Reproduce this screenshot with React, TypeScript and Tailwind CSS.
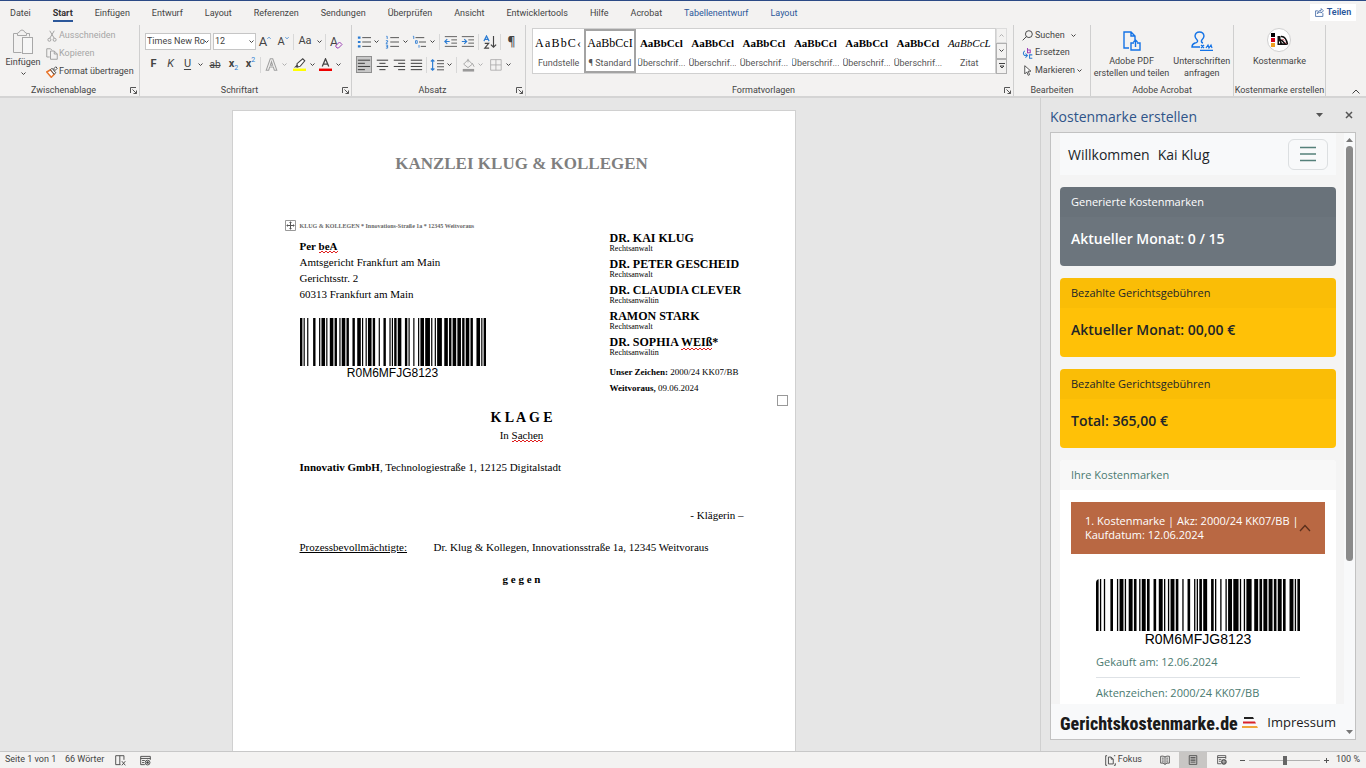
import { useState, type ReactNode } from "react";

const TABS = [
  "Datei",
  "Start",
  "Einfügen",
  "Entwurf",
  "Layout",
  "Referenzen",
  "Sendungen",
  "Überprüfen",
  "Ansicht",
  "Entwicklertools",
  "Hilfe",
  "Acrobat",
];

const CONTEXT_TABS = ["Tabellenentwurf", "Layout"];

const STYLES = [
  { name: "Fundstelle", sample: "AaBbC‹", look: "text-[12px] tracking-widest" },
  { name: "¶ Standard", sample: "AaBbCcI", look: "text-[12px]" },
  { name: "Überschrif...", sample: "AaBbCcl", look: "text-[11px] font-bold" },
  { name: "Überschrif...", sample: "AaBbCcl", look: "text-[11px] font-bold" },
  { name: "Überschrif...", sample: "AaBbCcl", look: "text-[11px] font-bold" },
  { name: "Überschrif...", sample: "AaBbCcl", look: "text-[11px] font-bold" },
  { name: "Überschrif...", sample: "AaBbCcl", look: "text-[11px] font-bold" },
  { name: "Überschrif...", sample: "AaBbCcl", look: "text-[11px] font-bold" },
  { name: "Zitat", sample: "AaBbCcL", look: "text-[11px] italic" },
];

const LAWYERS = [
  { name: "DR. KAI KLUG", role: "Rechtsanwalt" },
  { name: "DR. PETER GESCHEID", role: "Rechtsanwalt" },
  { name: "DR. CLAUDIA CLEVER", role: "Rechtsanwältin" },
  { name: "RAMON STARK", role: "Rechtsanwalt" },
];

// Code 128 symbols: Start B, R 0 M 6 M F J G, Code C, 81, 23, checksum, Stop
const CODE128 = [
  "211214",
  "231131",
  "123122",
  "113123",
  "223112",
  "113123",
  "132311",
  "112133",
  "211313",
  "113141",
  "121142",
  "312131",
  "312131",
  "2331112",
].join("");

function Barcode({ className }: { className: string }) {
  const bars: { x: number; w: number }[] = [];
  let x = 0;
  CODE128.split("").forEach((digit, i) => {
    const w = Number(digit);
    if (i % 2 === 0) bars.push({ x, w });
    x += w;
  });
  return (
    <svg
      className={className}
      viewBox={`0 0 ${x} 40`}
      preserveAspectRatio="none"
      role="img"
      aria-label="Barcode R0M6MFJG8123"
    >
      {bars.map((b) => (
        <rect key={b.x} x={b.x} y="0" width={b.w} height="40" fill="#000" />
      ))}
    </svg>
  );
}

function Icon({
  children,
  className = "h-4 w-4",
}: {
  children: ReactNode;
  className?: string;
}) {
  return (
    <svg
      className={`${className} shrink-0`}
      viewBox="0 0 16 16"
      fill="none"
      stroke="#444"
      strokeWidth={1}
    >
      {children}
    </svg>
  );
}

function Chevron({ light = false }: { light?: boolean }) {
  return (
    <svg
      className="h-[5px] w-[5px] shrink-0"
      viewBox="0 0 5 5"
      fill="none"
      stroke={light ? "#b0b0b0" : "#444"}
    >
      <path d="M.5 1.5l2 2 2-2" />
    </svg>
  );
}

function Tool({
  label,
  children,
  className = "w-[17px]",
}: {
  label: string;
  children: ReactNode;
  className?: string;
}) {
  return (
    <button
      aria-label={label}
      className={`${className} flex h-[17px] shrink-0 items-center justify-center`}
    >
      {children}
    </button>
  );
}

function More({ light = false }: { light?: boolean }) {
  return (
    <Tool label="Weitere Optionen" className="w-[9px]">
      <Chevron light={light} />
    </Tool>
  );
}

function Sep({ className = "mx-px" }: { className?: string }) {
  return <span className={`${className} h-4 w-px shrink-0 bg-[#d8d8d8]`} />;
}

function Launcher() {
  return (
    <button aria-label="Dialog öffnen" className="absolute right-[2px] bottom-[2px]">
      <svg
        className="h-[7px] w-[7px]"
        viewBox="0 0 7 7"
        fill="none"
        stroke="#555"
      >
        <path d="M.5 6V.5H6M2.5 2.5l4 4M6.5 3.5v3h-3" />
      </svg>
    </button>
  );
}

function Group({
  title,
  className,
  launcher = false,
  children,
}: {
  title: string;
  className: string;
  launcher?: boolean;
  children: ReactNode;
}) {
  return (
    <section
      className={`${className} flex flex-col border-r border-[#cfcfcf]`}
    >
      <div className="flex-1 pt-px">{children}</div>
      <div
        className={`relative pb-px text-center leading-[10px] whitespace-nowrap ${
          launcher ? "pr-3" : ""
        }`}
      >
        {title}
        {launcher && <Launcher />}
      </div>
    </section>
  );
}

function Lines({ rows }: { rows: [number, number][] }) {
  return (
    <Icon className="h-[14px] w-[14px]">
      {rows.map(([from, to], i) => (
        <path key={i} d={`M${from} ${2.5 + i * 3.6}H${to}`} strokeWidth="1.2" />
      ))}
    </Icon>
  );
}

function ClipboardGroup() {
  return (
    <Group title="Zwischenablage" className="w-[140px] shrink-0" launcher>
      <div className="flex">
        <button className="flex w-[46px] flex-col items-center pt-[3px]">
          <svg
            className="h-[26px] w-[22px]"
            viewBox="0 0 22 26"
            fill="none"
            stroke="#a8a8a8"
          >
            <path d="M9.5 23.5H1.5V4.5H5.5M14.5 4.5H17.5V7.5M5.5 6.5V4.5Q5.5 3.5 7 3.5 8 1 10 1T13 3.5Q14.5 3.5 14.5 4.5V6.5Z" />
            <rect x="10.5" y="8.5" width="10" height="16" fill="#f6f6f6" />
          </svg>
          <span className="mt-px leading-[12px]">Einfügen</span>
          <span className="flex h-2 items-end">
            <Chevron />
          </span>
        </button>
        <div className="flex flex-col items-start pt-px">
          <button
            disabled
            className="flex h-[18px] items-center text-[#a6a6a6]"
          >
            <Icon className="mr-px h-3 w-3">
              <g stroke="#a0a0a0" strokeWidth="1.3">
                <path d="M5 1l6 10M11 1L5 11" />
                <circle cx="4.5" cy="13" r="2" />
                <circle cx="11.5" cy="13" r="2" />
              </g>
            </Icon>
            Ausschneiden
          </button>
          <button
            disabled
            className="flex h-[18px] items-center text-[#a6a6a6]"
          >
            <Icon className="mr-px h-3 w-3">
              <g stroke="#a0a0a0" strokeWidth="1.3">
                <path d="M5 12H1V1h5l2 2" />
                <path d="M6 4h5l4 4v7H6zM11 4v4h4" />
              </g>
            </Icon>
            Kopieren
          </button>
          <button className="flex h-[18px] items-center whitespace-nowrap">
            <Icon className="mr-px h-3 w-3">
              <path d="M1 8l5-3 5 6-4 4z" fill="#fff" stroke="#e8762c" strokeWidth="2" />
              <path d="M6 5l2-2 5 6-2 2zM10 4l3-3 2 2-3 3z" fill="#fff" strokeWidth="1.3" />
            </Icon>
            Format übertragen
          </button>
        </div>
      </div>
    </Group>
  );
}

function FontGroup() {
  return (
    <Group title="Schriftart" className="w-[212px] shrink-0" launcher>
      <div className="flex items-center pt-[7px] pl-[5px]">
        <div className="relative mr-[2px]">
          <select
            aria-label="Schriftart"
            className="block h-[17px] w-[66px] appearance-none border border-[#c6c6c6] bg-white pl-px"
          >
            <option>Times New Ro</option>
          </select>
          <span className="pointer-events-none absolute top-[6px] right-[2px]">
            <Chevron />
          </span>
        </div>
        <div className="relative">
          <select
            aria-label="Schriftgrad"
            className="block h-[17px] w-[43px] appearance-none border border-[#c6c6c6] bg-white pl-px"
          >
            <option>12</option>
          </select>
          <span className="pointer-events-none absolute top-[6px] right-[2px]">
            <Chevron />
          </span>
        </div>
        <Tool label="Schrift vergrößern" className="w-[18px]">
          <span className="text-[13px] leading-none">A</span>
          <svg className="mb-2 h-1 w-1" viewBox="0 0 5 5" fill="none" stroke="#2b7cd3">
            <path d="M.5 3.5l2-2 2 2" />
          </svg>
        </Tool>
        <Tool label="Schrift verkleinern" className="w-[18px]">
          <span className="text-[11px] leading-none">A</span>
          <svg className="mb-2 h-1 w-1" viewBox="0 0 5 5" fill="none" stroke="#2b7cd3">
            <path d="M.5 1.5l2 2 2-2" />
          </svg>
        </Tool>
        <Sep />
        <Tool label="Groß-/Kleinschreibung" className="w-[20px]">
          <span className="text-[11px]">Aa</span>
        </Tool>
        <More />
        <Sep className="mr-[2px] ml-px" />
        <Tool label="Formatierung löschen">
          <span className="text-[12px] leading-none">A</span>
          <Icon className="mt-[6px] -ml-[3px] h-2 w-2">
            <path d="M1 10L9 2l5 5-7 7H4z" stroke="#9b3fb5" strokeWidth="2" fill="#f3f2f1" />
          </Icon>
        </Tool>
      </div>
      <div className="flex items-center pt-[6px] pl-[5px] text-[11px]">
        <Tool label="Fett">
          <b>F</b>
        </Tool>
        <Tool label="Kursiv">
          <i>K</i>
        </Tool>
        <Tool label="Unterstrichen">
          <u className="underline-offset-2">U</u>
        </Tool>
        <More />
        <Tool label="Durchgestrichen" className="w-[20px]">
          <s className="text-[10px]">ab</s>
        </Tool>
        <Tool label="Tiefgestellt">
          <b>x</b>
          <span className="mt-2 text-[7px] text-[#2b7cd3]">2</span>
        </Tool>
        <Tool label="Hochgestellt">
          <b>x</b>
          <span className="mb-2 text-[7px] text-[#2b7cd3]">2</span>
        </Tool>
        <Sep className="ml-px mr-[2px]" />
        <Tool label="Texteffekte">
          <Icon className="h-[13px] w-[13px]">
            <path
              d="M6.5 1h3l5 14h-3l-1.3-4H5.8L4.5 15h-3zM8 4.5L6.6 9h2.8z"
              stroke="#a0a0a0"
              strokeWidth="1.3"
            />
          </Icon>
        </Tool>
        <More light />
        <Tool label="Texthervorhebungsfarbe" className="ml-px w-[18px]">
          <Icon className="h-[13px] w-[13px]">
            <path d="M0 14.5h16" stroke="#ffff00" strokeWidth="3" />
            <path d="M5 7l7-6 2.5 2.5L9 10 5 11.5z" strokeWidth="1.3" fill="#fff" />
            <path d="M1 12l4-4 2 2.5z" fill="#444" stroke="none" />
          </Icon>
        </Tool>
        <More />
        <Tool label="Schriftfarbe">
          <Icon className="h-[13px] w-[13px]">
            <path d="M0 14.5h16" stroke="#ee0000" strokeWidth="3" />
            <path d="M4 10.5L8 1l4 9.5M5.5 7.5h5" strokeWidth="1.6" />
          </Icon>
        </Tool>
        <More />
      </div>
    </Group>
  );
}

function ParagraphGroup() {
  return (
    <Group title="Absatz" className="w-[174px] shrink-0" launcher>
      <div className="flex items-center pt-[7px] pl-[3px]">
        <Tool label="Aufzählungszeichen">
          <Icon className="h-[14px] w-[14px]">
            <path d="M1 3h3M1 8h3M1 13h3" stroke="#2b7cd3" strokeWidth="2.4" />
            <path d="M6 3h10M6 8h10M6 13h10" />
          </Icon>
        </Tool>
        <More />
        <Tool label="Nummerierung" className="ml-[2px] w-[18px]">
          <Icon className="h-[14px] w-[14px]">
            <path d="M1.5 1.5h1v3M1 6.5h2v1.5l-2 1.5h2M1 11.5h2v3.5H1M1.5 13.2H3" stroke="#2b7cd3" />
            <path d="M6 3h10M6 8h10M6 13h10" />
          </Icon>
        </Tool>
        <More />
        <Tool label="Liste mit mehreren Ebenen" className="w-[18px]">
          <Icon className="h-[14px] w-[14px]">
            <path d="M1 1.5h1v3M4 6.5h2v3H4zM8 11.5v3" stroke="#2b7cd3" />
            <path d="M4 3h10M8 8h8M10 13h6" />
          </Icon>
        </Tool>
        <More />
        <Sep className="mx-[2px]" />
        <Tool label="Einzug verkleinern">
          <Icon className="h-[13px] w-[13px]">
            <path d="M1 2h15M9 6h7M9 10h7M1 14h15" />
            <path d="M7 8H1M4 5L1 8l3 3" stroke="#2b7cd3" strokeWidth="1.4" />
          </Icon>
        </Tool>
        <Tool label="Einzug vergrößern">
          <Icon className="h-[13px] w-[13px]">
            <path d="M1 2h15M9 6h7M9 10h7M1 14h15" />
            <path d="M1 8h6M4 5l3 3-3 3" stroke="#2b7cd3" strokeWidth="1.4" />
          </Icon>
        </Tool>
        <Sep className="mx-[2px]" />
        <Tool label="Sortieren">
          <Icon className="h-[14px] w-[14px]">
            <path d="M1 7l3-6 3 6M2 5h4" stroke="#2b7cd3" strokeWidth="1.3" />
            <path d="M2 9.5h4.5L2 15h5M12 1v13M9 11l3 3 3-3" strokeWidth="1.3" />
          </Icon>
        </Tool>
        <Sep className="mx-[2px]" />
        <Tool label="Absatzmarken anzeigen">
          <span className="font-['Open_Sans',sans-serif] text-[12px] font-semibold">
            ¶
          </span>
        </Tool>
      </div>
      <div className="flex items-center pt-[6px] pl-[4px]">
        <button
          aria-label="Linksbündig"
          className="mr-px flex h-[17px] w-4 items-center justify-center border border-[#8f8f8f] bg-[#c8c8c8]"
        >
          <Lines rows={[[1, 15], [1, 9], [1, 15], [1, 9]]} />
        </button>
        <Tool label="Zentriert">
          <Lines rows={[[2, 15], [5, 12], [2, 15], [5, 12]]} />
        </Tool>
        <Tool label="Rechtsbündig">
          <Lines rows={[[2, 15], [7, 15], [2, 15], [7, 15]]} />
        </Tool>
        <Tool label="Blocksatz">
          <Lines rows={[[2, 15], [2, 15], [2, 15], [2, 15]]} />
        </Tool>
        <Sep className="mr-px ml-[2px]" />
        <Tool label="Zeilenabstand">
          <Icon className="h-[14px] w-[14px]">
            <path d="M3 2v12M1 4l2-2 2 2M1 12l2 2 2-2" stroke="#2b7cd3" strokeWidth="1.3" />
            <path d="M8 3h8M8 6.5h8M8 10h8M8 13.5h8" />
          </Icon>
        </Tool>
        <More />
        <Sep className="mx-[2px]" />
        <Tool label="Schattierung">
          <Icon className="h-[14px] w-[14px]">
            <path d="M2 14h13" stroke="#999" strokeWidth="3" />
            <path d="M3 7l5-5 5 5-5 4zM8 5V1M13 6l2 4" stroke="#a0a0a0" />
          </Icon>
        </Tool>
        <More light />
        <Tool label="Rahmen" className="ml-px w-[18px]">
          <Icon className="h-[13px] w-[13px]">
            <path d="M2 2h13v13H2zM8.5 2v13M2 8.5h13" stroke="#a8a8a8" />
          </Icon>
        </Tool>
        <More />
      </div>
    </Group>
  );
}

function StylesGroup() {
  const [selected, setSelected] = useState(1);
  return (
    <Group title="Formatvorlagen" className="min-w-0 flex-1" launcher>
      <div className="mx-[6px] mt-[2px] flex h-[46px] bg-white">
        <div className="flex min-w-0 flex-1 border border-[#d0d0d0]">
          {STYLES.map((s, i) => (
            <button
              key={i}
              onClick={() => setSelected(i)}
              className={`flex min-w-0 flex-1 flex-col items-center justify-center overflow-hidden border-2 pt-px whitespace-nowrap ${
                i === selected ? "border-[#a3a3a3]" : "border-transparent"
              }`}
            >
              <span
                className={`${s.look} font-['Liberation_Serif',serif] leading-[18px] text-black`}
              >
                {s.sample}
              </span>
              <span className="mt-[4px] leading-[14px] text-[#555]">
                {s.name}
              </span>
            </button>
          ))}
        </div>
        <div className="flex w-[11px] flex-col bg-[#f3f2f1]">
          <button
            aria-label="Vorherige Zeile"
            className="flex flex-1 items-center justify-center border border-[#dcdcdc]"
          >
            <svg className="h-[5px] w-[5px]" viewBox="0 0 5 5" fill="none" stroke="#b0b0b0">
              <path d="M.5 3.5l2-2 2 2" />
            </svg>
          </button>
          <button
            aria-label="Nächste Zeile"
            className="flex flex-1 items-center justify-center border border-[#b0b0b0]"
          >
            <Chevron />
          </button>
          <button
            aria-label="Alle Formatvorlagen"
            className="flex flex-1 items-center justify-center border border-[#b0b0b0]"
          >
            <svg className="h-[6px] w-[6px]" viewBox="0 0 6 6" fill="none" stroke="#444">
              <path d="M0 .5h6M1 3l2 2 2-2z" />
            </svg>
          </button>
        </div>
      </div>
    </Group>
  );
}

function EditGroup() {
  return (
    <Group title="Bearbeiten" className="w-[77px] shrink-0">
      <div className="flex flex-col items-start pt-px pl-[8px]">
        <button className="flex h-[17px] items-center gap-[2px]">
          <Icon className="h-[11px] w-[11px]">
            <circle cx="10" cy="6" r="5" strokeWidth="1.4" />
            <path d="M6.5 9.5L1 15" strokeWidth="1.4" />
          </Icon>
          Suchen
          <span className="ml-1">
            <Chevron />
          </span>
        </button>
        <button className="flex h-[18px] items-center gap-[2px]">
          <Icon className="h-[11px] w-[11px]">
            <path d="M8 0v7h4V3H8" stroke="#9b3fb5" strokeWidth="1.5" />
            <path d="M15 10h-4v5h4M4 4Q0 8 4 11h4M5 8l3 3-3 3" stroke="#2b7cd3" strokeWidth="1.5" />
          </Icon>
          Ersetzen
        </button>
        <button className="flex h-[17px] items-center gap-[2px]">
          <Icon className="h-[11px] w-[11px]">
            <path d="M4 1v12l3-3 2 5 2-1-2-5h4z" strokeWidth="1.3" fill="#fff" />
          </Icon>
          Markieren
          <Chevron />
        </button>
      </div>
    </Group>
  );
}

function AcrobatGroup() {
  return (
    <Group title="Adobe Acrobat" className="w-[143px] shrink-0">
      <div className="flex justify-center gap-1 pt-[5px] leading-[12px]">
        <button className="flex flex-col items-center whitespace-nowrap">
          <svg
            className="mb-[4px] h-5 w-[18px]"
            viewBox="0 0 18 20"
            fill="none"
            stroke="#1473e6"
            strokeWidth="1.4"
          >
            <path d="M6 17H1V1h7l4 4v4M8 1v4h4M11 12H8v7h9v-7h-3M12.5 16V9M10.5 11l2-2 2 2" />
          </svg>
          <span>Adobe PDF</span>
          <span>erstellen und teilen</span>
        </button>
        <button className="flex flex-col items-center whitespace-nowrap">
          <svg
            className="mb-[4px] h-5 w-[22px]"
            viewBox="0 0 22 20"
            fill="none"
            stroke="#1473e6"
            strokeWidth="1.4"
          >
            <path d="M9 16H1Q1 13 4 12 7 11.500 6.500 9.500 4 7 4 5 4.500 1 8.500 1T13 5Q13 7 10.500 9.500 10 11.500 12 12" />
            <path d="M10 14l3 3M13 14l-3 3M15 17l2-3 1 3 2-3 1 3M9 19.3h13" strokeWidth="1.2" />
          </svg>
          <span>Unterschriften</span>
          <span>anfragen</span>
        </button>
      </div>
    </Group>
  );
}

function KostenmarkeGroup() {
  return (
    <Group title="Kostenmarke erstellen" className="w-[92px] shrink-0">
      <button className="mx-auto flex flex-col items-center pt-[2px] leading-[12px]">
        <svg className="mb-[3px] h-6 w-6" viewBox="0 0 24 24">
          <circle cx="12" cy="12" r="11.5" fill="#fff" stroke="#cfcfcf" />
          <path d="M4 5h4v4H4z" fill="#000" />
          <path d="M4 10h4v4H4z" fill="#d0021b" />
          <path d="M4 15h4v4H4z" fill="#f0a020" />
          <path d="M10.5 8h3v3l2 1 5 5h-10z" fill="#111" />
          <path d="M14 8.5q5-.5 6.500 8" stroke="#111" strokeWidth="1.6" fill="none" />
          <path d="M12.5 13.5v2M16 15.5l-1.500-2" stroke="#fff" />
          <path d="M15.5 11l1.5 1.5M18 14.5l1 1" stroke="#d0021b" />
        </svg>
        Kostenmarke
      </button>
    </Group>
  );
}

function Ribbon() {
  const [active, setActive] = useState("Start");
  return (
    <header className="border-t border-b-2 border-t-[#2b4a86] border-b-[#d4d4d4] bg-[#f3f2f1]">
      <nav className="flex h-6 items-start justify-between pr-[10px] pl-[10px]">
        <div className="flex gap-[22px] pt-[5px]">
          {TABS.map((tab) => (
            <button
              key={tab}
              onClick={() => setActive(tab)}
              className={`h-[16px] border-b-2 leading-[13px] ${
                tab === active
                  ? "border-[#2b579a] font-bold text-[#333]"
                  : "border-transparent"
              }`}
            >
              {tab}
            </button>
          ))}
          {CONTEXT_TABS.map((tab) => (
            <button
              key={tab}
              className="h-[16px] border-b-2 border-transparent leading-[13px] text-[#2b579a]"
            >
              {tab}
            </button>
          ))}
        </div>
        <button className="mt-[3px] flex h-[17px] w-[46px] items-center justify-center gap-[3px] bg-white font-semibold text-[#2b579a]">
          <Icon className="h-[9px] w-[9px]">
            <path d="M5 5H1v10h13V9M4 10q1-6 7-6V1l4 4-4 4V7q-4 0-7 3z" stroke="#2b579a" strokeWidth="1.3" />
          </Icon>
          Teilen
        </button>
      </nav>
      <div className="flex h-[71px]">
        <ClipboardGroup />
        <FontGroup />
        <ParagraphGroup />
        <StylesGroup />
        <EditGroup />
        <AcrobatGroup />
        <KostenmarkeGroup />
        <div className="flex w-[40px] shrink-0 items-end justify-end pr-[6px]">
          <button aria-label="Menüband reduzieren">
            <svg className="mb-[2px] h-[5px] w-2" viewBox="0 0 8 5" fill="none" stroke="#444">
              <path d="M.5 4.5L4 1l3.5 3.5" />
            </svg>
          </button>
        </div>
      </div>
    </header>
  );
}

// two offset dash rows read as the spell checker's squiggle
function Typo({ children }: { children: ReactNode }) {
  return (
    <span className="bg-[linear-gradient(90deg,#e02020_50%,transparent_50%),linear-gradient(90deg,#e02020_50%,transparent_50%)] bg-size-[4px_1px] bg-position-[0_100%,2px_calc(100%-1px)] bg-repeat-x pb-px">
      {children}
    </span>
  );
}

function Page() {
  return (
    <main className="flex min-w-0 flex-1 justify-center overflow-hidden bg-[#e6e6e6] pt-3 pr-[13px]">
      <article className="h-full w-[564px] border border-b-0 border-[#d0d0d0] bg-white pr-[51px] pl-[67px] font-['Liberation_Serif',serif] text-[11px] leading-4 text-black">
        <h1 className="pt-[43px] text-center text-[17px] leading-5 font-bold text-[#7f7f7f]">
          KANZLEI KLUG &amp; KOLLEGEN
        </h1>
        <div className="mt-[46px] flex">
          <div className="w-[310px] shrink-0">
            <div className="relative text-[6px] leading-3 font-bold text-[#666]">
              <svg
                className="absolute top-0 -left-[15px] h-[11px] w-[11px]"
                viewBox="0 0 11 11"
                fill="none"
                stroke="#555"
              >
                <path d="M.5.5h10v10H.5z" stroke="#999" />
                <path d="M5.5 1.5v8M1.5 5.5h8M4.5 2.5h2M4.5 8.5h2M2.5 4.5v2M8.5 4.5v2" />
              </svg>
              KLUG &amp; KOLLEGEN * Innovations-Straße 1a * 12345 Weitvoraus
            </div>
            <address className="pt-[6px] not-italic">
              <b>
                Per <Typo>beA</Typo>
              </b>
              <br />
              Amtsgericht Frankfurt am Main
              <br />
              Gerichtsstr. 2
              <br />
              60313 Frankfurt am Main
            </address>
            <figure className="mt-4 w-[186px]">
              <Barcode className="block h-12 w-full" />
              <figcaption className="text-center font-['Liberation_Sans',sans-serif] text-[12px] leading-[14px]">
                R0M6MFJG8123
              </figcaption>
            </figure>
          </div>
          <div className="relative flex-1 pt-[11px]">
            {LAWYERS.map((l) => (
              <div key={l.name} className="h-[26px]">
                <div className="text-[12px] leading-[14px] font-bold whitespace-nowrap">
                  {l.name}
                </div>
                <div className="text-[8px] leading-[8px]">{l.role}</div>
              </div>
            ))}
            <div className="h-[26px]">
              <div className="text-[12px] leading-[14px] font-bold">
                DR. SOPHIA <Typo>WEIß</Typo>*
              </div>
              <div className="text-[8px] leading-[8px]">Rechtsanwältin</div>
            </div>
            <p className="mt-[3px] text-[9px] leading-4 whitespace-nowrap">
              <b>Unser Zeichen:</b> 2000/24 KK07/BB
              <br />
              <b>Weitvoraus,</b> 09.06.2024
            </p>
            <span className="absolute -right-[44px] bottom-[-10px] h-[11px] w-[11px] border border-[#999]" />
          </div>
        </div>
        <h2 className="mt-[14px] text-center text-[14px] leading-4 font-bold">
          K L A G E
        </h2>
        <p className="text-center leading-[18px]">
          In <Typo>Sachen</Typo>
        </p>
        <p className="mt-[15px]">
          <b>Innovativ GmbH</b>, Technologiestraße 1, 12125 Digitalstadt
        </p>
        <p className="mt-8 text-right">- Klägerin –</p>
        <p className="mt-4 flex">
          <span className="w-[134px] underline">Prozessbevollmächtigte:</span>
          Dr. Klug &amp; Kollegen, Innovationsstraße 1a, 12345 Weitvoraus
        </p>
        <p className="mt-4 text-center font-bold">g e g e n</p>
      </article>
    </main>
  );
}

function StatCard({
  title,
  value,
  className,
}: {
  title: string;
  value: string;
  className: string;
}) {
  return (
    <section className={`${className} mt-3 overflow-hidden rounded`}>
      <h3 className="bg-black/2 px-[11px] py-[6px] text-[11px] leading-[18px]">
        {title}
      </h3>
      <p className="px-[11px] pt-3 pb-[17px] text-[14px] leading-5 font-semibold">
        {value}
      </p>
    </section>
  );
}

function TaskPane() {
  const [open, setOpen] = useState(true);
  return (
    <aside className="flex w-[326px] shrink-0 flex-col border-l border-[#d0d0d0] bg-[#e6e6e6] pr-[10px] pb-[11px] pl-[9px] font-['Open_Sans',sans-serif]">
      <div className="flex h-[34px] items-center">
        <h2 className="flex-1 pt-[3px] text-[14px] text-[#2f5489]">
          Kostenmarke erstellen
        </h2>
        <button aria-label="Aufgabenbereichsoptionen" className="mr-[22px]">
          <svg className="h-[4px] w-[7px]" viewBox="0 0 7 4" fill="#555">
            <path d="M0 0h7L3.5 4z" />
          </svg>
        </button>
        <button aria-label="Schließen" className="mr-[3px]">
          <svg className="h-2 w-2" viewBox="0 0 8 8" stroke="#555" strokeWidth="1.5">
            <path d="M1 1l6 6M7 1L1 7" />
          </svg>
        </button>
      </div>
      <div className="flex min-h-0 flex-1 border border-[#c2c2c2] bg-[#f8f9fa]">
        <div className="flex min-w-0 flex-1 flex-col">
          <div className="min-h-0 flex-1 overflow-hidden bg-[#f4f4f4] pr-2 pl-[9px] text-[#212529]">
            <nav className="flex h-[42px] items-center justify-between bg-[#f8f9fa] pr-2 pl-2">
              <span className="flex gap-2 text-[14px]">
                <span>Willkommen</span>
                <span>Kai Klug</span>
              </span>
              <button
                aria-label="Menü"
                className="flex h-[31px] w-10 items-center justify-center rounded-md border border-[#dcdfe1]"
              >
                <svg className="h-4 w-[18px]" viewBox="0 0 18 16" stroke="#54807a" strokeWidth="1.4">
                  <path d="M1 1.5h16M1 8h16M1 14.5h16" />
                </svg>
              </button>
            </nav>
            <StatCard
              title="Generierte Kostenmarken"
              value="Aktueller Monat: 0 / 15"
              className="bg-[#6c757d] text-white"
            />
            <StatCard
              title="Bezahlte Gerichtsgebühren"
              value="Aktueller Monat: 00,00 €"
              className="bg-[#ffc107]"
            />
            <StatCard
              title="Bezahlte Gerichtsgebühren"
              value="Total: 365,00 €"
              className="bg-[#ffc107]"
            />
            <section className="mt-3 rounded-t bg-white text-[11px] text-[#4a7a70]">
              <h3 className="rounded-t bg-[#f8f8f8] px-[11px] py-[6px] leading-[18px]">
                Ihre Kostenmarken
              </h3>
              <div className="px-[11px] py-3">
                <button
                  aria-expanded={open}
                  onClick={() => setOpen(!open)}
                  className="flex h-[52px] w-full items-center justify-between bg-[#b96843] px-[14px] text-left leading-[14px] text-white"
                >
                  <span className="whitespace-nowrap">
                    1. Kostenmarke | Akz: 2000/24 KK07/BB |
                    <br />
                    Kaufdatum: 12.06.2024
                  </span>
                  <svg className="h-2 w-3 shrink-0" viewBox="0 0 12 8" fill="none" stroke="#5a2f1c" strokeWidth="1.3">
                    <path d="M1 7l5-5.5L11 7" />
                  </svg>
                </button>
                {open && (
                  <div className="px-[25px] pt-[25px]">
                    <Barcode className="block h-[52px] w-full rounded-tl" />
                    <p className="text-center font-['Liberation_Sans',sans-serif] text-[14px] leading-4 text-black">
                      R0M6MFJG8123
                    </p>
                    <p className="border-b border-[#dee2e6] pt-[6px] pb-[6px] leading-[18px]">
                      Gekauft am: 12.06.2024
                    </p>
                    <p className="pt-[6px] leading-[18px]">
                      Aktenzeichen: 2000/24 KK07/BB
                    </p>
                  </div>
                )}
              </div>
            </section>
          </div>
          <footer className="flex h-[35px] shrink-0 items-center justify-between bg-[#f8f9fa] pt-[3px] pr-2 pl-[9px] text-[#1a1a1a]">
            <span className="flex items-center gap-1">
              <span className="font-['Liberation_Sans_Narrow','Roboto_Condensed','Open_Sans_Condensed','Roboto',sans-serif] text-[18px] font-extrabold whitespace-nowrap">
                Gerichtskostenmarke.de
              </span>
              <svg className="h-3 w-4 shrink-0" viewBox="0 0 16 12">
                <path d="M2 0h9l1 2H2z" fill="#222" />
                <path d="M1 4.5h12l1 2H1z" fill="#d8232a" />
                <path d="M0 9h15l1 2H0z" fill="#f0a63a" />
              </svg>
            </span>
            <a href="#impressum" className="text-[13px]">
              Impressum
            </a>
          </footer>
        </div>
        <div className="flex w-[11px] shrink-0 flex-col items-center pt-[5px] pb-[5px]">
          <svg className="h-1 w-[7px]" viewBox="0 0 7 4" fill="#777">
            <path d="M0 4h7L3.5 0z" />
          </svg>
          <div className="mt-1 flex w-full flex-1 justify-center">
            <div className="h-[71%] w-[7px] rounded-full bg-[#8a8a8a]" />
          </div>
          <svg className="h-1 w-[7px]" viewBox="0 0 7 4" fill="#777">
            <path d="M0 0h7L3.5 4z" />
          </svg>
        </div>
      </div>
    </aside>
  );
}

function StatusBar() {
  return (
    <footer className="flex h-[17px] shrink-0 items-center justify-between border-t border-[#c8c8c8] bg-[#f3f2f1] pl-[5px]">
      <div className="flex items-center">
        <span className="w-[60px]">Seite 1 von 1</span>
        <span className="w-[50px]">66 Wörter</span>
        <button aria-label="Rechtschreibprüfung" className="mr-[14px]">
          <Icon className="h-[11px] w-[11px]">
            <path d="M8 14H1V1h12v6M7 1v13M10 9l5 6M15 9l-5 6" strokeWidth="1.3" />
          </Icon>
        </button>
        <button aria-label="Makroaufzeichnung">
          <Icon className="h-[11px] w-[11px]">
            <path d="M7 14H1V2h14v5M1 5h14M3 8h4M3 11h3" strokeWidth="1.3" />
            <circle cx="11" cy="11" r="3.5" strokeWidth="1.3" />
            <circle cx="11" cy="11" r="1.5" fill="#444" />
          </Icon>
        </button>
      </div>
      <div className="flex h-full items-center">
        <button className="mr-[9px] flex items-center gap-[2px]">
          <Icon className="h-[11px] w-[11px]">
            <path d="M3 1H1v14h2M13 1h2M13 15h2v-3M5 3h4l3 3v7H5zM9 3v3h3" strokeWidth="1.3" />
          </Icon>
          Fokus
        </button>
        <button aria-label="Lesemodus" className="flex h-full w-7 items-center justify-center">
          <Icon className="h-[10px] w-[10px]">
            <path d="M8 3v12M8 3Q5 1 1 2v11q4-1 7 2 3-3 7-2V2Q11 1 8 3M3 5h3M3 8h3M3 11h3M10 5h3M10 8h3M10 11h3" strokeWidth="1.3" />
          </Icon>
        </button>
        <button
          aria-label="Seitenlayout"
          aria-pressed="true"
          className="flex h-full w-7 items-center justify-center bg-[#c8c6c4]"
        >
          <Icon className="h-[10px] w-[10px]">
            <path d="M2 1h12v14H2zM4 4h8M4 6.5h8M4 9h8M4 11.5h8" strokeWidth="1.3" />
          </Icon>
        </button>
        <button aria-label="Weblayout" className="mr-1 flex h-full w-[29px] items-center justify-center">
          <Icon className="h-[10px] w-[10px]">
            <path d="M7 14H1V1h13v5M1 4h13M3 7h4M3 10h3" strokeWidth="1.3" />
            <circle cx="11" cy="11" r="4" fill="#555" />
            <path d="M8 11h6M11 8v6" stroke="#ddd" />
          </Icon>
        </button>
        <button aria-label="Verkleinern" className="h-px w-[5px] bg-[#555]" />
        <input
          type="range"
          aria-label="Zoom"
          min={10}
          max={190}
          defaultValue={100}
          className="mx-[4px] h-px w-[71px] appearance-none bg-[#b0b0b0] [&::-webkit-slider-thumb]:h-[9px] [&::-webkit-slider-thumb]:w-[4px] [&::-webkit-slider-thumb]:appearance-none [&::-webkit-slider-thumb]:bg-[#666]"
        />
        <button aria-label="Vergrößern">
          <svg className="h-[5px] w-[5px]" viewBox="0 0 5 5" stroke="#555">
            <path d="M2.5 0v5M0 2.5h5" />
          </svg>
        </button>
        <span className="w-[37px] pr-[6px] text-right whitespace-nowrap">
          100 %
        </span>
      </div>
    </footer>
  );
}

export default function App() {
  return (
    <div className="flex h-screen flex-col overflow-hidden bg-[#e6e6e6] font-['Roboto','Noto_Sans',sans-serif] text-[9px] text-[#444]">
      <Ribbon />
      <div className="flex min-h-0 flex-1">
        <Page />
        <TaskPane />
      </div>
      <StatusBar />
    </div>
  );
}
